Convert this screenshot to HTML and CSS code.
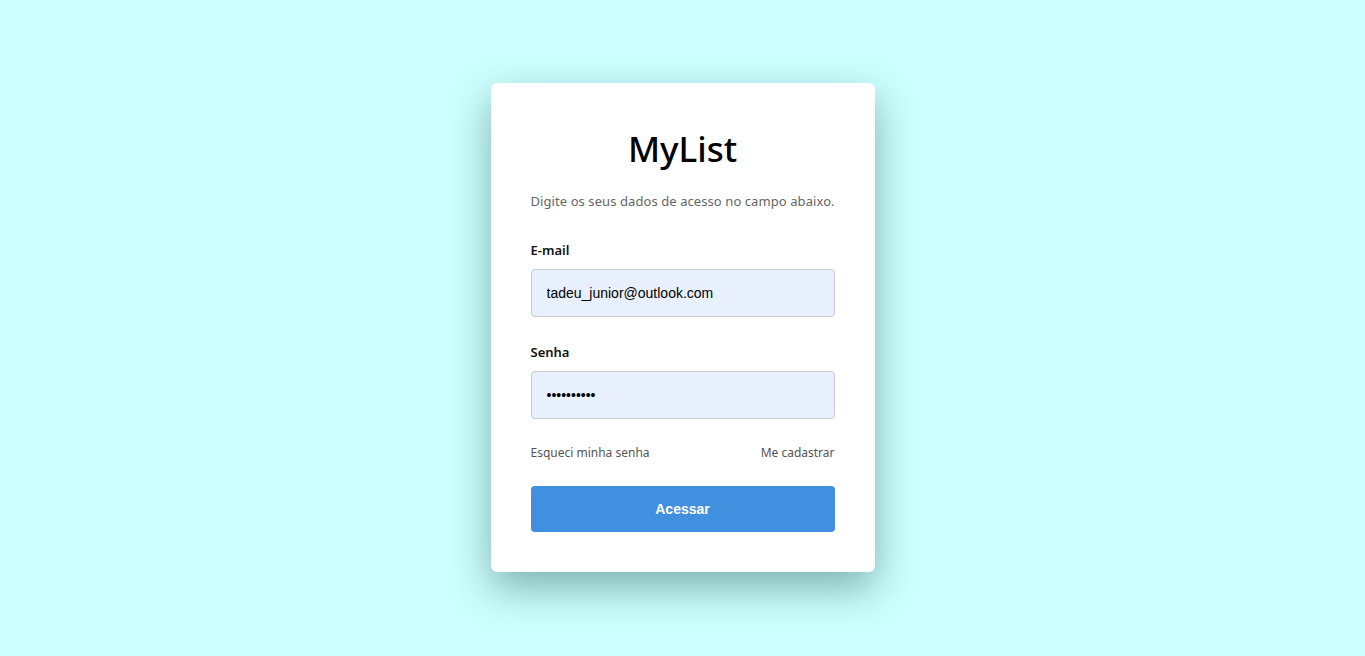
FILE: index.html
```html
<!DOCTYPE html>
<html lang="pt-BR">
<head>
<meta charset="utf-8">
<title>MyList</title>
<link rel="stylesheet" href="styles.css">
</head>
<body>
<main class="page">
  <form class="card">
    <h1 class="title">MyList</h1>
    <p class="subtitle">Digite os seus dados de acesso no campo abaixo.</p>
    <label class="label" for="email">E-mail</label>
    <input class="input" id="email" type="text" value="tadeu_junior@outlook.com">
    <label class="label label-2" for="senha">Senha</label>
    <input class="input" id="senha" type="password" value="1234567890">
    <div class="links">
      <a class="link" href="#">Esqueci minha senha</a>
      <a class="link" href="#">Me cadastrar</a>
    </div>
    <button class="button" type="button">Acessar</button>
  </form>
</main>
</body>
</html>
```
FILE: styles.css
```css
html, body {
  margin: 0;
  padding: 0;
  height: 100%;
}
body {
  background: #ccfffe;
  font-family: "Noto Sans", "Open Sans", sans-serif;
}
.page {
  height: 100%;
  display: flex;
  align-items: center;
  justify-content: center;
}
.card {
  width: 304px;
  padding: 40px;
  margin-top: -1px;
  background: #fff;
  border-radius: 6px;
  box-shadow: 0 16px 40px rgba(20, 70, 70, 0.42);
  display: flex;
  flex-direction: column;
}
.title {
  margin: 0;
  font-size: 35px;
  line-height: 52px;
  font-weight: 500;
  text-align: center;
  color: #000;
}
.subtitle {
  margin: 16px 0 0;
  font-size: 13px;
  letter-spacing: 0.08px;
  line-height: 20px;
  color: #666;
  text-align: center;
  white-space: nowrap;
}
.label {
  margin-top: 29px;
  font-size: 13px;
  line-height: 20px;
  font-weight: 600;
  color: #111;
}
.label-2 {
  margin-top: 25px;
}
.input {
  margin-top: 9px;
  box-sizing: border-box;
  height: 48px;
  width: 100%;
  padding: 0 15px;
  background: #e8f0fe;
  border: 1px solid #c8ccd2;
  border-radius: 4px;
  font-family: "Liberation Sans", Arial, sans-serif;
  font-size: 14px;
  color: #000;
  outline: none;
}
.links {
  margin-top: 24px;
  display: flex;
  justify-content: space-between;
  line-height: 20px;
}
.link {
  font-size: 12px;
  color: #555;
  text-decoration: none;
}
.button {
  margin-top: 23px;
  height: 46px;
  width: 100%;
  border: none;
  border-radius: 4px;
  background: #4190e0;
  color: #fff;
  font-family: "Liberation Sans", Arial, sans-serif;
  font-size: 14px;
  font-weight: 700;
  cursor: pointer;
}
```
